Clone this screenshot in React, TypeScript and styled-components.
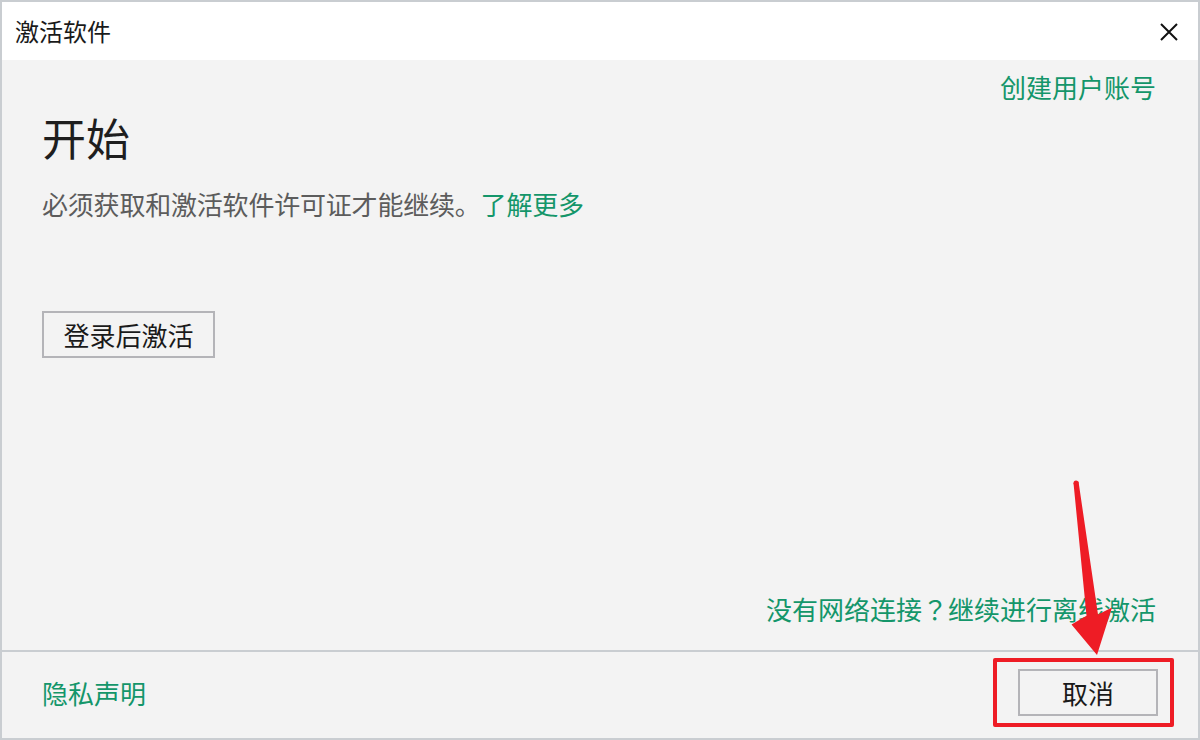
import * as React from "react";
import styled, { createGlobalStyle } from "styled-components";

const GlobalStyle = createGlobalStyle`
  html, body {
    margin: 0;
    padding: 0;
    background: #ffffff;
  }
  body {
    font-family: "Noto Sans CJK SC", "Noto Sans", sans-serif;
  }
`;

const green = "#14966a";

const Dialog = styled.div`
  position: relative;
  width: 1200px;
  height: 740px;
  box-sizing: border-box;
  border: 2px solid #c9cdd1;
  display: flex;
  flex-direction: column;
  background: #f3f3f3;
  overflow: hidden;
`;

const TitleBar = styled.div`
  height: 58px;
  background: #ffffff;
  display: flex;
  align-items: center;
  justify-content: space-between;
  padding: 0 20px 0 13px;
`;

const Title = styled.span`
  font-size: 24px;
  line-height: 24px;
  color: #1a1a1a;
`;

const CloseButton = styled.button`
  width: 18px;
  height: 18px;
  padding: 0;
  border: none;
  background: none;
  display: flex;
  cursor: pointer;
  margin-top: 2px;
`;

const Body = styled.div`
  flex: 1;
  display: flex;
  flex-direction: column;
  padding: 14px 42px 28px 40px;
`;

const Link = styled.a<{ $align?: "left" | "right" | "center" }>`
  display: block;
  align-self: ${(p) =>
    p.$align === "right" ? "flex-end" : p.$align === "center" ? "center" : "flex-start"};
  font-size: 26px;
  line-height: 26px;
  color: ${green};
  text-decoration: none;
  cursor: pointer;
`;

const FullWidthMark = styled.span`
  font-family: "Noto Sans CJK TC", "Noto Sans CJK SC", sans-serif;
`;

const Heading = styled.h1`
  margin: 15px 0 0 0;
  font-size: 44px;
  line-height: 44px;
  font-weight: 400;
  color: #1e1e1e;
`;

const Description = styled.p`
  margin: 32px 0 0 0;
  font-size: 26px;
  line-height: 26px;
  letter-spacing: -0.2px;
  color: #5c5c5c;

  ${Link} {
    display: inline;
  }
`;

const Button = styled.button<{ $width: number }>`
  box-sizing: border-box;
  width: ${(p) => p.$width}px;
  height: 47px;
  border: 2px solid #b4b4b8;
  background: #f3f3f3;
  font-family: inherit;
  font-size: 26px;
  line-height: 26px;
  color: #1a1a1a;
  padding: 0;
  display: flex;
  align-items: center;
  justify-content: center;
  cursor: pointer;
`;

const SignInButton = styled(Button)`
  margin: 94px 0 0 0;
`;

const OfflineLink = styled(Link)`
  margin-top: auto;
`;

const Footer = styled.div`
  height: 88px;
  box-sizing: border-box;
  border-top: 2px solid #c9cdd1;
  display: flex;
  align-items: center;
  justify-content: space-between;
  padding: 0 40px 5px 40px;
`;

const Highlight = styled.div`
  position: relative;

  &::after {
    content: "";
    position: absolute;
    left: -25px;
    top: -11px;
    right: -16px;
    bottom: -11px;
    border: 4px solid #ee1c25;
    border-radius: 2px;
    pointer-events: none;
  }
`;

const ArrowLayer = styled.svg`
  position: absolute;
  left: -2px;
  top: -2px;
  width: 1200px;
  height: 740px;
  pointer-events: none;
`;

function CloseIcon() {
  return (
    <svg width="18" height="18" viewBox="0 0 18 18">
      <path d="M1 1 L17 17 M17 1 L1 17" stroke="#111" strokeWidth="2" fill="none" />
    </svg>
  );
}

export default function App() {
  return (
    <>
      <GlobalStyle />
      <Dialog>
        <TitleBar>
          <Title>激活软件</Title>
          <CloseButton aria-label="关闭">
            <CloseIcon />
          </CloseButton>
        </TitleBar>
        <Body>
          <Link $align="right">创建用户账号</Link>
          <Heading>开始</Heading>
          <Description>
            必须获取和激活软件许可证才能继续。<Link>了解更多</Link>
          </Description>
          <SignInButton $width={173}>登录后激活</SignInButton>
          <OfflineLink $align="right">
            没有网络连接<FullWidthMark>？</FullWidthMark>继续进行离线激活
          </OfflineLink>
        </Body>
        <Footer>
          <Link $align="center">隐私声明</Link>
          <Highlight>
            <Button $width={140}>取消</Button>
          </Highlight>
        </Footer>
        <ArrowLayer viewBox="0 0 1200 740">
          <polygon
            points="1073.5,483 1078.5,481.5 1098,614.5 1112,607.5 1097,655 1071.5,624.5 1086.5,615.8"
            fill="#ee1c25"
          />
          <circle cx="1076" cy="483" r="2.5" fill="#ee1c25" />
        </ArrowLayer>
      </Dialog>
    </>
  );
}
